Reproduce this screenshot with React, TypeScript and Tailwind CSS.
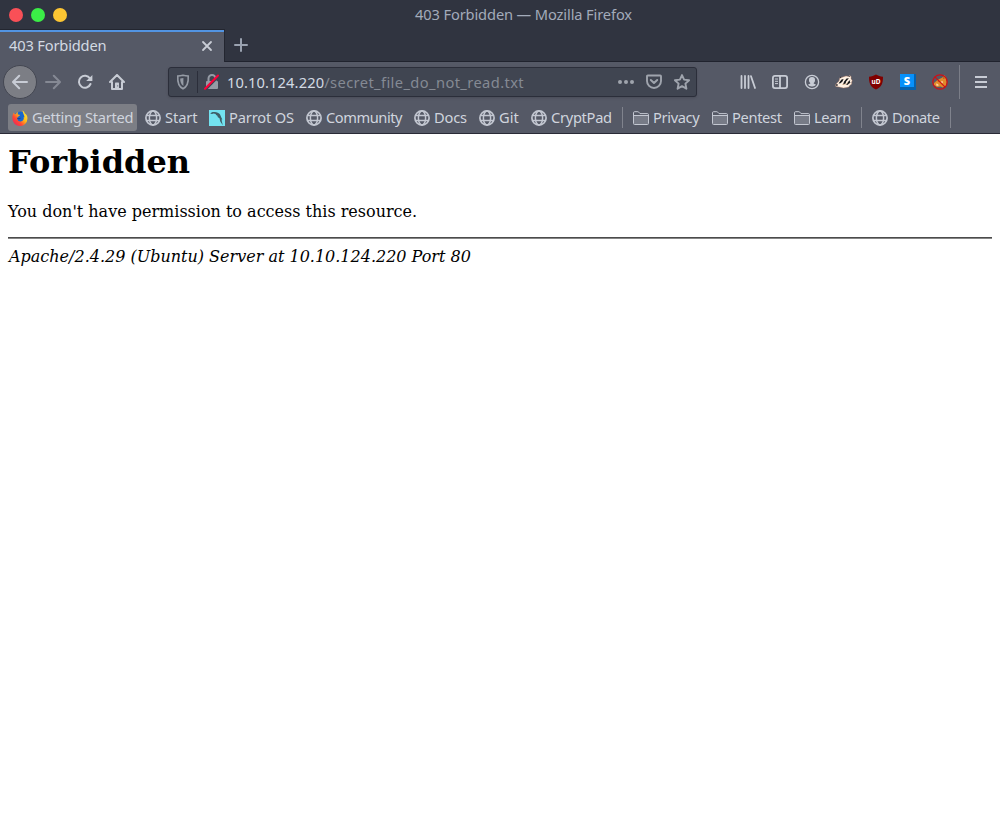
import React from 'react';

type IconProps = { className?: string };

const Globe = () => (
  <svg viewBox="0 0 16 16" className="size-4 shrink-0 text-[#c3c7d1]" fill="none" stroke="currentColor" strokeWidth="1.7">
    <circle cx="8" cy="8" r="7.1" />
    <ellipse cx="8" cy="8" rx="3.6" ry="7" strokeWidth="1.5" />
    <path d="M1.6 5.5h12.8M1.6 10.5h12.8" strokeWidth="1.3" />
  </svg>
);

const Folder = () => (
  <svg viewBox="0 0 16 16" className="size-4 shrink-0 text-[#c3c7d1]" stroke="currentColor">
    <path d="M.5 13V2.8q0-1.100 1.100-1.100h3.300q.5 0 .8.400l1.300 1.500h7.400q1.100 0 1.100 1.100V13.500q0 1-1 1h-13q-1 0-1-1z" fill="none" />
    <path d="M1 6h14v8H1z" fill="#777b87" stroke="none" />
    <path d="M.5 5.500h15" />
  </svg>
);

const FirefoxLogo = () => (
  <svg viewBox="0 0 16 16" className="size-4 shrink-0">
    <defs>
      <linearGradient id="flame" x1="1" y1="0" x2="0" y2="1">
        <stop offset="0" stopColor="#fff044" />
        <stop offset=".4" stopColor="#ffbd17" />
        <stop offset=".65" stopColor="#ff4934" />
        <stop offset="1" stopColor="#e3166c" />
      </linearGradient>
    </defs>
    <circle cx="8.300" cy="7.400" r="6" fill="#1668cf" />
    <path d="M10.500.5c1.600 1 2 2.300 2.500 3 1.900 1.200 2.600 3.300 2.400 5.200A7.500 7.500 0 0 1 .4 8.400C.2 5.600 1 3.600 2 2.500l.4 1.800 1.400-.2C4.400 2.800 5.400 2.300 6.300 2c-.6.800-.7 1.800-.4 2.500l1.600.3c.6.300.1.900-.4 1.200l-1 .7-.8 1.500c0 2.300 1.700 3.500 3.500 3.300 2.500-.2 3.500-2.600 2.800-4.800l.8.700c.2-1.900-1.500-3.600-1.900-6.900z" fill="url(#flame)" />
    <path d="M4.800 7.600c2 1.300 3-.3 4 .2-.2 1.100-1.100 1.500-2 1.500-1 .1-1.700-.5-2-1.700z" fill="#213f91" />
  </svg>
);

const ParrotLogo = () => (
  <svg viewBox="0 0 16 16" className="size-4 shrink-0">
    <path d="M0 0h16v16H0z" fill="#73e2f0" />
    <path d="M1.500 3.300C3 1.700 5 2 7.200 2.300c2.400.3 3.900 1.600 4.500 3.600.5 1.500 1.300 2.300 1.700 3.700l-.8-.3.2 2 1 3.900-2.500-3.700-.8-3.300-1.600-.9-.7-1.900-1.300-.3-.1-1.100-2.300-.5-1.400.4-1.600-.1z" fill="#3d5e68" />
  </svg>
);

const BackIcon = ({ className = '' }: IconProps) => (
  <svg viewBox="0 0 16 16" className={`size-4 ${className}`} fill="none" stroke="currentColor" strokeWidth="2" strokeLinecap="round" strokeLinejoin="round">
    <path d="M15 8H1.500M7.200 1.800 1 8l6.200 6.200" />
  </svg>
);

const ReloadIcon = () => (
  <svg viewBox="0 0 16 16" className="size-4" fill="none" stroke="currentColor" strokeWidth="2" strokeLinecap="round">
    <path d="M13 4.500A6 6 0 1 0 13.500 10" />
    <path d="M15.400.9V7H9.200z" fill="currentColor" stroke="none" />
  </svg>
);

const HomeIcon = () => (
  <svg viewBox="0 0 16 16" className="size-4" fill="none" stroke="currentColor" strokeWidth="2" strokeLinecap="round" strokeLinejoin="round">
    <path d="M1 8l7-7 7 7M3 8v7h10V8" />
    <path d="M6 15V9.300q0-.7.7-.7h2.600q.7 0 .7.700V15z" fill="currentColor" stroke="none" />
    <path d="M8.700 11.800v.2" stroke="#555966" strokeWidth="1" />
  </svg>
);

const ShieldIcon = () => (
  <svg viewBox="0 0 16 16" className="size-4 text-[#959ba5]" fill="none" stroke="currentColor" strokeWidth="1.600">
    <path d="M8 1.200c2 .6 3.600.8 5.200.8.4 5.600-.4 10.400-5.200 12.800C3.200 12.400 2.400 7.600 2.800 2c1.600 0 3.200-.2 5.200-.8z" />
    <path d="M8.400 4v8C5.700 10.200 5.200 7.500 5.200 4.600 6.500 4.500 7.500 4.300 8.400 4z" fill="currentColor" stroke="none" />
  </svg>
);

const LockIcon = () => (
  <svg viewBox="0 0 16 16" className="size-4">
    <path d="M4.500 7V4.500a3.500 3.500 0 0 1 7 0V7" fill="none" stroke="#959ba5" strokeWidth="2" />
    <rect x="2" y="7" width="12" height="8" rx="1" fill="#959ba5" />
    <path d="m1.700 15.700 14-14.200" stroke="#3f4450" strokeWidth="2" />
    <path d="M1 14.700 14 1.500" stroke="#ff0039" strokeWidth="2" strokeLinecap="round" />
  </svg>
);

const PocketIcon = () => (
  <svg viewBox="0 0 16 16" className="size-4" fill="none" stroke="currentColor" strokeWidth="1.900" strokeLinecap="round" strokeLinejoin="round">
    <path d="M1 2.300q0-.8.8-.8h12.400q.8 0 .8.800V7A7 7 0 0 1 1 7z" />
    <path d="m4.800 6 3.200 3 3.200-3" strokeWidth="2" />
  </svg>
);

const StarIcon = () => (
  <svg viewBox="0 0 16 16" className="size-4" fill="none" stroke="currentColor" strokeWidth="1.900" strokeLinejoin="round">
    <path d="m8 1.100 2.100 4.500 5 .6-3.700 3.400 1 5.100L8 12.200l-4.400 2.500 1-5.100L.9 6.200l5-.6z" />
  </svg>
);

const LibraryIcon = () => (
  <svg viewBox="0 0 16 16" className="size-4" fill="none" stroke="currentColor" strokeWidth="1.800" strokeLinecap="round">
    <path d="M1.500 2v12M5 2v12M8.500 2v12M11 2.200l4 11.800" />
  </svg>
);

const SidebarIcon = () => (
  <svg viewBox="0 0 16 16" className="size-4" fill="none" stroke="currentColor" strokeWidth="1.800">
    <rect x=".9" y="1.900" width="14.200" height="12.200" rx="2" />
    <path d="M8 2v12" />
    <path d="M3 5h3M3 7.300h3M3 9.600h3" strokeWidth="1" />
  </svg>
);

const AccountIcon = () => (
  <svg viewBox="0 0 16 16" className="size-4">
    <circle cx="8" cy="8" r="6.600" fill="none" stroke="currentColor" strokeWidth="1.300" />
    <path d="M8 3a3 3 0 0 1 3 3.200c0 1.300-.6 2.200-1.300 2.700v.7l2.400 1.200A5 5 0 0 1 8 12.600a5 5 0 0 1-4.100-1.800l2.400-1.200v-.7C5.600 8.400 5 7.500 5 6.200A3 3 0 0 1 8 3z" fill="currentColor" />
  </svg>
);

const BadgerIcon = () => (
  <svg viewBox="0 0 18 16" className="h-4 w-[18px]">
    <path d="M.7 10.500 4 7l1-3.500 2.300-.3L11 2l2.500.4 1.200-.9 1.400 1-.1 2.300 1.200 1.700-.7 2 .2 1.400-2 1.700-1 1.500-2.500.5-2.700.3-4.200-.8-3.500-.7z" fill="#fff1e3" stroke="#b98265" strokeWidth=".4" />
    <path d="m3.500 9.500 3-4 2.100-.4-1.300 2.700-1.900 1.500zM9.100 7.500l2.500-2.900 2.300-.3-2.800 3.300-.5 2-2.700 1.200zM13.400 7.400l1.800-1.500-.4 2.300 1 .3-2 1.200-1 1.100-1.700.1z" fill="#171719" />
    <path d="m5 2.800 1.600.2-1.300 1.500zM13.500 1.700l2 1.100-1.400.2zM.7 10.200h2l.2 1.300-1.500.4z" fill="#29252a" />
    <path d="m7 10.500 3.800-.3 2.200-1.800" fill="none" stroke="#ddb18a" strokeWidth=".6" />
  </svg>
);

const BlockerIcon = () => (
  <svg viewBox="0 0 16 16" className="size-4">
    <path d="M8 .5c2.100 1.300 4.300 2 7 2.200 0 6.300-1 10-7 12.800C2 12.700 1 9 1 2.700 3.700 2.500 5.900 1.800 8 .5z" fill="#800000" />
    <text x="8" y="9.900" textAnchor="middle" fontFamily="Noto Sans, sans-serif" fontWeight="700" fontSize="6.500" fill="white">uD</text>
  </svg>
);

const StylusIcon = () => (
  <span className="flex size-4 shrink-0 border-r-2 border-b-[3px] border-[#0761ac] bg-[#0791fb]">
    <span className="w-full text-center text-[11px] leading-[13px] font-black text-white">S</span>
  </span>
);

const NoFoxIcon = () => (
  <svg viewBox="0 0 16 16" className="size-4">
    <path d="m2 9 3.500-3 4.500-2.200 2.800-2.500 1.200 2.700.9 4-1 4-3.400 1.500-2-1-3.500.5-3-2z" fill="#e18a2b" />
    <path d="m4 9.500 2 .5.800 1.500-2.200.4zM9 7.500l1.500-.5.5 1.500-1.500.9z" fill="#ffd5a2" />
    <path d="M5.500 6.800 7 7l-.5.7zM10.800 3.900l1.500-.8v1.800z" fill="#84501c" />
    <circle cx="8" cy="8" r="7.200" fill="none" stroke="#ce1017" strokeWidth="1.300" />
    <path d="m2.900 2.900 10.200 10.200" stroke="#ce1017" strokeWidth="1.200" />
  </svg>
);

type Bookmark = { label: string; icon: React.ReactNode; size: string; tracking: string };

const bookmarks: (Bookmark | 'divider')[] = [
  { label: 'Start', icon: <Globe />, size: 'w-[64px]', tracking: 'tracking-[-0.1px]' },
  { label: 'Parrot OS', icon: <ParrotLogo />, size: 'w-[97px]', tracking: 'tracking-[-0.15px]' },
  { label: 'Community', icon: <Globe />, size: 'w-[108px]', tracking: 'tracking-[-0.45px]' },
  { label: 'Docs', icon: <Globe />, size: 'w-[65px]', tracking: 'tracking-[-0.2px]' },
  { label: 'Git', icon: <Globe />, size: 'w-[52px]', tracking: 'tracking-normal' },
  { label: 'CryptPad', icon: <Globe />, size: 'w-[91px]', tracking: 'tracking-[-0.3px]' },
  'divider',
  { label: 'Privacy', icon: <Folder />, size: 'w-[79px]', tracking: 'tracking-[-0.35px]' },
  { label: 'Pentest', icon: <Folder />, size: 'w-[82px]', tracking: 'tracking-[-0.35px]' },
  { label: 'Learn', icon: <Folder />, size: 'w-[67px]', tracking: 'tracking-[-0.5px]' },
  'divider',
  { label: 'Donate', icon: <Globe />, size: 'w-[78px]', tracking: 'tracking-[-0.5px]' },
  'divider',
];

export default function App() {
  return (
    <div className="flex h-[834px] w-[1000px] flex-col overflow-hidden bg-white font-['Noto_Sans',sans-serif] text-[14.667px] leading-5 whitespace-nowrap">
      <header className="flex h-[29px] shrink-0 items-center bg-[#303440]">
        <div className="flex w-[415px] shrink-0 items-center gap-2 pl-[9px]">
          <span className="size-3.5 rounded-full bg-[#f95057]" />
          <span className="size-3.5 rounded-full bg-[#3bed47]" />
          <span className="size-3.5 rounded-full bg-[#fdc633]" />
        </div>
        <span className="pb-0.5 tracking-[-0.13px] text-[#a3abba]">403 Forbidden — Mozilla Firefox</span>
      </header>

      <div className="flex h-[33px] shrink-0 bg-[#303440]">
        <div className="flex w-[225px] items-center border-t border-r border-[#232630] bg-[#555966]">
          <div className="flex h-full w-full items-center justify-between border-t-2 border-[#5294e2] pr-[11px] pb-[3px] pl-[9px]">
            <span className="pb-0.5 tracking-[-0.17px] text-[#d3dae3]">403 Forbidden</span>
            <svg viewBox="0 0 12 12" className="size-3 text-[#c9cdd6]" fill="none" stroke="currentColor" strokeWidth="1.800" strokeLinecap="round">
              <path d="m2 2 8 8m0-8-8 8" />
            </svg>
          </div>
        </div>
        <div className="flex flex-1 items-center border-b border-[#20232e] pl-2">
          <svg viewBox="0 0 16 16" className="size-4 text-[#9aa2b0]" fill="none" stroke="currentColor" strokeWidth="2" strokeLinecap="round">
            <path d="M8 2v12M2 8h12" />
          </svg>
        </div>
      </div>

      <nav className="flex h-10 shrink-0 items-center bg-[#555966] text-[#c8ccd5]">
        <div className="flex w-[168px] shrink-0 items-center gap-4 pl-[3px]">
          <span className="-mr-2 flex size-[34px] shrink-0 items-center justify-center rounded-full border border-[#444752] bg-[#7c7e85]">
            <BackIcon />
          </span>
          <BackIcon className="rotate-180 text-[#858994]" />
          <ReloadIcon />
          <HomeIcon />
        </div>
        <div className="flex h-[30px] w-[529px] shrink-0 items-center rounded-[3px] border border-[#2b2e3a] bg-[#404551] shadow-sm">
          <span className="flex h-[22px] w-[29px] items-center justify-center border-r border-[#2b2e3a]"><ShieldIcon /></span>
          <span className="ml-1.5 mr-[7px]"><LockIcon /></span>
          <span className="flex-1 tracking-[0.4px] text-[#858a94]"><span className="tracking-[0.12px] text-[#d3dae3]">10.10.124.220</span>/secret_file_do_not_read.txt</span>
          <div className="mr-1.5 flex items-center gap-3 text-[#9fa4ad]">
            <svg viewBox="0 0 16 16" className="size-4" fill="currentColor"><circle cx="2" cy="8" r="2" /><circle cx="8" cy="8" r="2" /><circle cx="14" cy="8" r="2" /></svg>
            <PocketIcon />
            <StarIcon />
          </div>
        </div>
        <div className="ml-[43px] flex items-center gap-4">
          <LibraryIcon />
          <SidebarIcon />
          <AccountIcon />
          <span className="-mx-px flex"><BadgerIcon /></span>
          <BlockerIcon />
          <StylusIcon />
          <NoFoxIcon />
        </div>
        <span className="ml-[11px] h-[34px] w-px bg-[#7b7e88]" />
        <svg viewBox="0 0 16 16" className="ml-[13px] size-4" fill="none" stroke="currentColor" strokeWidth="2">
          <path d="M2 3h12M2 8h12M2 13h12" />
        </svg>
      </nav>

      <div className="flex h-8 shrink-0 border-b border-[#292a36] bg-[#555966] pt-0.5 pl-2 text-[#d0d5de]">
        <div className="mr-2 flex h-[27px] w-[129px] items-center gap-1 rounded-[3px] bg-[#7c7e85] pl-1">
          <FirefoxLogo />
          <span className="pb-0.5 tracking-[-0.28px]">Getting Started</span>
        </div>
        {bookmarks.map((item, index) =>
          item === 'divider' ? (
            <span key={index} className="mt-[3px] mr-2.5 h-[21px] w-px shrink-0 bg-[#80838d]" />
          ) : (
            <div key={item.label} className={`flex h-[27px] shrink-0 items-center gap-1 ${item.size}`}>
              {item.icon}
              <span className={`pb-0.5 ${item.tracking}`}>{item.label}</span>
            </div>
          ),
        )}
      </div>

      <main className="flex-1 px-2 pt-[9px] font-['DejaVu_Serif',serif] text-[16px] leading-[19px] text-black">
        <h1 className="text-[32px] leading-[38px] font-bold">Forbidden</h1>
        <p className="mt-[21px]">You don't have permission to access this resource.</p>
        <hr className="mt-4 h-0.5 border-t border-b border-t-[#4b4b4b] border-b-[#858585]" />
        <address className="mt-2 pl-px italic">Apache/2.4.29 (Ubuntu) Server at 10.10.124.220 Port 80</address>
      </main>
    </div>
  );
}
